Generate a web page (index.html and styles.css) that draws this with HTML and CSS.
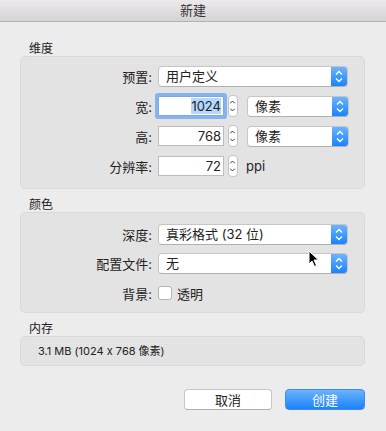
FILE: index.html
```html
<!DOCTYPE html>
<html lang="zh-CN">
<head>
    <meta charset="UTF-8">
    <title>新建</title>
    <link rel="stylesheet" href="styles.css">
</head>
<body>
    <div class="window">
        <div class="titlebar">新建</div>
        <div class="content">
            <div class="section-label first">维度</div>
            <div class="group group-size">
                <div class="row row-first">
                    <span class="label">预置:</span>
                    <div class="popup popup-wide">
                        <span class="popup-text">用户定义</span>
                        <span class="popup-arrow">
                            <svg width="16" height="21" viewBox="0 0 16 21"><path d="M5 8.5 L8 5.5 L11 8.5 M5 12.5 L8 15.5 L11 12.5" fill="none" stroke="#fff" stroke-width="1.3"/></svg>
                        </span>
                    </div>
                </div>
                <div class="row">
                    <span class="label">宽:</span>
                    <div class="field focused"><span class="selected">1024</span></div>
                    <span class="stepper">
                        <svg width="10" height="22" viewBox="0 0 10 22"><path d="M2.5 8 L5 5.5 L7.5 8 M2.5 14 L5 16.5 L7.5 14" fill="none" stroke="#333" stroke-width="1.1"/></svg>
                    </span>
                    <div class="popup popup-unit">
                        <span class="popup-text">像素</span>
                        <span class="popup-arrow">
                            <svg width="16" height="21" viewBox="0 0 16 21"><path d="M5 8.5 L8 5.5 L11 8.5 M5 12.5 L8 15.5 L11 12.5" fill="none" stroke="#fff" stroke-width="1.3"/></svg>
                        </span>
                    </div>
                </div>
                <div class="row">
                    <span class="label">高:</span>
                    <div class="field">768</div>
                    <span class="stepper">
                        <svg width="10" height="22" viewBox="0 0 10 22"><path d="M2.5 8 L5 5.5 L7.5 8 M2.5 14 L5 16.5 L7.5 14" fill="none" stroke="#333" stroke-width="1.1"/></svg>
                    </span>
                    <div class="popup popup-unit">
                        <span class="popup-text">像素</span>
                        <span class="popup-arrow">
                            <svg width="16" height="21" viewBox="0 0 16 21"><path d="M5 8.5 L8 5.5 L11 8.5 M5 12.5 L8 15.5 L11 12.5" fill="none" stroke="#fff" stroke-width="1.3"/></svg>
                        </span>
                    </div>
                </div>
                <div class="row">
                    <span class="label">分辨率:</span>
                    <div class="field">72</div>
                    <span class="stepper">
                        <svg width="10" height="22" viewBox="0 0 10 22"><path d="M2.5 8 L5 5.5 L7.5 8 M2.5 14 L5 16.5 L7.5 14" fill="none" stroke="#333" stroke-width="1.1"/></svg>
                    </span>
                    <span class="unit">ppi</span>
                </div>
            </div>

            <div class="section-label">颜色</div>
            <div class="group group-color">
                <div class="row row-first">
                    <span class="label">深度:</span>
                    <div class="popup popup-wide">
                        <span class="popup-text">真彩格式 (32 位)</span>
                        <span class="popup-arrow">
                            <svg width="16" height="21" viewBox="0 0 16 21"><path d="M5 8.5 L8 5.5 L11 8.5 M5 12.5 L8 15.5 L11 12.5" fill="none" stroke="#fff" stroke-width="1.3"/></svg>
                        </span>
                    </div>
                </div>
                <div class="row">
                    <span class="label">配置文件:</span>
                    <div class="popup popup-wide">
                        <span class="popup-text">无</span>
                        <span class="popup-arrow">
                            <svg width="16" height="21" viewBox="0 0 16 21"><path d="M5 8.5 L8 5.5 L11 8.5 M5 12.5 L8 15.5 L11 12.5" fill="none" stroke="#fff" stroke-width="1.3"/></svg>
                        </span>
                    </div>
                    <svg class="cursor" width="12" height="18" viewBox="0 0 12 18"><path d="M1 1 L1 14 L4 11 L6.5 16.5 L8.5 15.5 L6 10 L10.5 10 Z" fill="#000" stroke="#fff" stroke-width="1"/></svg>
                </div>
                <div class="row row-check">
                    <span class="label">背景:</span>
                    <span class="checkbox"></span>
                    <span class="check-text">透明</span>
                </div>
            </div>

            <div class="section-label">内存</div>
            <div class="group group-memory">3.1 MB (1024 x 768 像素)</div>

            <div class="buttons">
                <button class="btn btn-cancel">取消</button>
                <button class="btn btn-default">创建</button>
            </div>
        </div>
    </div>
</body>
</html>
```
FILE: styles.css
```css
html, body {
    margin: 0;
    padding: 0;
}
body {
    font-family: "Inter", "Noto Sans CJK SC", sans-serif;
    font-feature-settings: "calt" 0;
    font-size: 13px;
    color: #222;
    background: #ececec;
}
.window {
    width: 386px;
    height: 431px;
    background: #ececec;
    overflow: hidden;
}
.titlebar {
    height: 21px;
    line-height: 21px;
    text-align: center;
    font-size: 13px;
    color: #333;
    background: linear-gradient(#ebe9eb, #d5d3d5);
    border-bottom: 1px solid #b3b3b3;
}
.content {
    padding: 0 21px 0 20px;
}
.section-label {
    font-size: 12px;
    padding-left: 9px;
    height: 14px;
    line-height: 14px;
    margin-top: 9px;
}
.section-label.first {
    margin-top: 20px;
}
.group {
    background: #e3e3e3;
    border: 1px solid #d9d9d9;
    border-radius: 5px;
}
.group-size {
    padding: 8px 0 11px;
}
.group-color {
    padding: 10px 0 11px;
}
.group-memory {
    height: 28px;
    line-height: 28px;
    padding-left: 17px;
    font-size: 11px;
}
.row {
    display: flex;
    align-items: center;
    height: 22px;
    margin-top: 8px;
    position: relative;
}
.group-color .row {
    margin-top: 7px;
}
.group .row-first {
    margin-top: 0;
}
.group .row-check {
    height: 16px;
    margin-top: 11px;
}
.label {
    width: 131px;
    text-align: right;
    margin-right: 6px;
    white-space: nowrap;
}
.popup {
    display: flex;
    height: 19px;
    background: #fff;
    border: 1px solid #c6c6c6;
    border-bottom-color: #b0b0b0;
    border-radius: 4px;
    overflow: hidden;
}
.popup-wide {
    width: 188px;
}
.popup-unit {
    width: 100px;
    margin-left: 9px;
}
.popup-text {
    flex: 1;
    line-height: 19px;
    padding-left: 7px;
}
.popup-arrow {
    width: 16px;
    display: flex;
    background: linear-gradient(#6cb4fb, #1a83fd);
}
.popup-arrow svg {
    margin-top: -1px;
}
.field {
    width: 62px;
    height: 18px;
    line-height: 18px;
    background: #fff;
    border: 1px solid #bdbdbd;
    text-align: right;
    padding-right: 2px;
}
.field.focused {
    box-shadow: 0 0 0 3px #86b3ee;
    border-color: #7fa8e2;
    border-radius: 1px;
}
.selected {
    background: #b3d7ff;
}
.stepper {
    display: flex;
    width: 10px;
    height: 22px;
    margin-left: 4px;
    background: #fff;
    border: 1px solid #c4c4c4;
    border-radius: 4px;
    box-sizing: border-box;
}
.stepper svg {
    margin-left: -1px;
    margin-top: -1px;
}
.unit {
    margin-left: 8px;
}
.checkbox {
    width: 12px;
    height: 12px;
    background: #fff;
    border: 1px solid #b4b4b4;
    border-radius: 3px;
}
.check-text {
    margin-left: 5px;
}
.cursor {
    position: absolute;
    left: 287px;
    top: -2px;
}
.buttons {
    display: flex;
    justify-content: flex-end;
    gap: 13px;
    margin-top: 23px;
}
.btn {
    height: 21px;
    font-family: inherit;
    font-size: 13px;
    border-radius: 4px;
    padding: 0;
}
.btn-cancel {
    width: 88px;
    background: #fff;
    color: #222;
    border: 1px solid #c6c6c6;
    border-bottom-color: #b0b0b0;
}
.btn-default {
    width: 80px;
    color: #fff;
    background: linear-gradient(#6cb3fa, #1a82fb);
    border: 1px solid #3a8cf5;
}
```
